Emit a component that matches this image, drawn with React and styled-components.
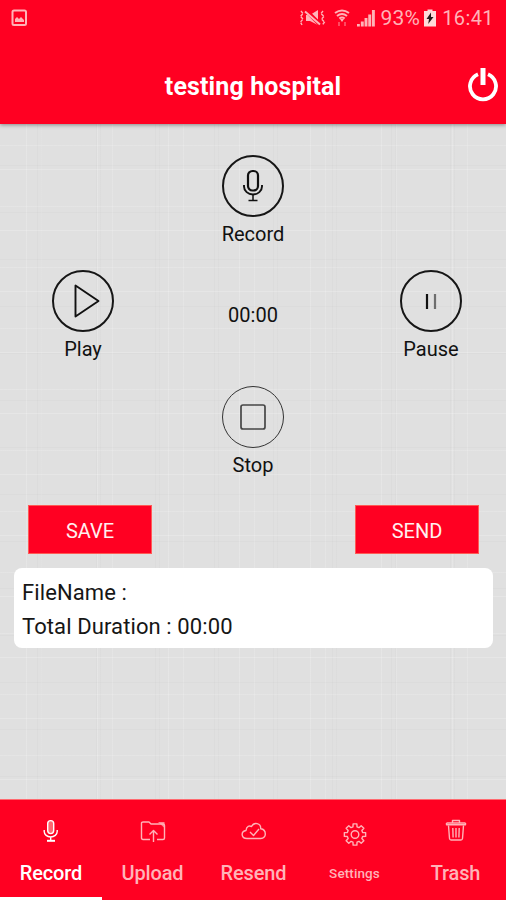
import React from 'react'
import styled, { createGlobalStyle } from 'styled-components'

const RED = '#ff0022';
const PINK = '#ffb3b8';

const GlobalStyle = createGlobalStyle`
  * {
    box-sizing: border-box;
  }
  body {
    margin: 0;
    font-family: Roboto, sans-serif;
  }
`;

const Screen = styled.div`
  width: 506px;
  height: 900px;
  display: flex;
  flex-direction: column;
  overflow: hidden;
`;

const Header = styled.header`
  height: 124px;
  flex-shrink: 0;
  background-color: ${RED};
  box-shadow: 0 1px 4px rgba(0, 0, 0, 0.4);
  z-index: 1;
`;

const StatusBar = styled.div`
  height: 36px;
  padding: 0 12px 0 11px;
  display: flex;
  align-items: center;
  color: ${PINK};
  font-size: 20px;
`;

const StatusIcons = styled.div`
  margin-left: auto;
  margin-right: 6px;
  display: flex;
  align-items: center;
  gap: 7px;
`;

const Battery = styled.span`
  margin-right: 4px;
  font-size: 21px;
  letter-spacing: 0.2px;
`;

const Clock = styled.span`
  margin-left: 6px;
  letter-spacing: 0.4px;
`;

const TitleBar = styled.div`
  height: 88px;
  padding: 0 7px 0 39px;
  display: grid;
  grid-template-columns: 1fr 32px;
  align-items: center;
`;

const Title = styled.h1`
  margin: 13px 0 0 2px;
  padding-right: 2px;
  color: #fff;
  font-size: 25px;
  line-height: 30px;
  font-weight: 700;
  letter-spacing: 0.12px;
  text-align: center;
`;

const PowerButton = styled.button`
  margin-top: 10px;
  padding: 0;
  border: 0;
  background: none;
  height: 36px;
  display: flex;
`;

const Main = styled.main`
  flex: 1;
  padding: 31px 13px 0 14px;
  background-color: #e0e0e0;
  background-image:
    repeating-linear-gradient(90deg, transparent 0 26px, rgba(255, 255, 255, 0.18) 26px 27px, transparent 27px 41px, rgba(255, 255, 255, 0.15) 41px 42px, transparent 42px 71px),
    repeating-linear-gradient(0deg, transparent 0 19px, rgba(255, 255, 255, 0.2) 19px 20px, transparent 20px 43px, rgba(255, 255, 255, 0.15) 43px 44px, transparent 44px 61px),
    repeating-linear-gradient(90deg, transparent 0 37px, rgba(0, 0, 0, 0.018) 37px 38px, transparent 38px 41px, rgba(0, 0, 0, 0.015) 41px 42px, transparent 42px 59px),
    repeating-linear-gradient(0deg, transparent 0 22px, rgba(0, 0, 0, 0.018) 22px 23px, transparent 23px 47px);
`;

const Controls = styled.div`
  height: 350px;
  display: grid;
  grid-template-columns: 138px 202px 154px;
  grid-template-rows: 115px 116px 115px;
`;

const Control = styled.div`
  grid-column: ${props => props.$col};
  grid-row: ${props => props.$row};
  justify-self: center;
  display: flex;
  flex-direction: column;
  align-items: center;
  color: #111;
  font-size: 20px;
  line-height: 24px;
`;

const Round = styled.div`
  width: 62px;
  height: 62px;
  margin-bottom: 5px;
  border: ${props => (props.$thin ? '1.3px solid #333' : '2px solid #161616')};
  border-radius: 50%;
  display: flex;
  align-items: center;
  justify-content: center;
`;

const PlayRound = styled(Round)`
  padding-left: 5px;
`;

const Timer = styled.div`
  grid-column: 2;
  grid-row: 2;
  justify-self: center;
  margin-top: 33px;
  color: #111;
  font-size: 20px;
  line-height: 24px;
`;

const Actions = styled.div`
  padding: 0 14px;
  display: flex;
  justify-content: space-between;
`;

const ActionButton = styled.button`
  width: 124px;
  height: 49px;
  padding: 2px 0 0;
  border: 1px solid #ff5a55;
  background-color: ${RED};
  color: #fff0f0;
  font-family: inherit;
  font-size: 20px;
`;

const FileCard = styled.div`
  height: 80px;
  margin-top: 14px;
  padding: 8px;
  border-radius: 8px;
  background-color: #fff;
  color: #161616;
  font-size: 22px;
  line-height: 34px;
  letter-spacing: 0.1px;
`;

const Tabs = styled.nav`
  height: 101px;
  flex-shrink: 0;
  border-top: 1px solid #ff6a70;
  background-color: ${RED};
  display: grid;
  grid-template-columns: 102px repeat(4, 101px);
`;

const Tab = styled.div`
  padding-top: 18px;
  border-bottom: 3px solid ${props => (props.$active ? '#fff' : 'transparent')};
  display: flex;
  flex-direction: column;
  align-items: center;
  color: ${props => (props.$active ? '#fff' : PINK)};
`;

const TabLabel = styled.span`
  margin-top: 17px;
  font-size: ${props => (props.$small ? '13.5px' : '20px')};
  font-weight: 500;
  line-height: 25px;
  letter-spacing: ${props => (props.$small ? '0.1px' : '-0.15px')};
`;

const Svg = styled.svg`
  display: block;
  fill: none;
  stroke: currentColor;
  stroke-width: ${props => props.$stroke || 1.4};
  stroke-linejoin: round;
`;

const PictureIcon = () => (
  <Svg width="17" height="18" viewBox="0 0 17 18" $stroke={2}>
    <rect x="1.5" y="1.5" width="13.5" height="14.5" rx="1.5" />
    <path d="M4 13v-3l2-2 2 2 2-2 3 3v2z" fill="currentColor" stroke="none" />
  </Svg>
)

const MuteIcon = () => (
  <Svg width="28" height="18" viewBox="0 0 28 18">
    <path d="M7 6h4l8-5v15l-8-4H7z" fill="currentColor" stroke="none" />
    <path d="M7 1.5l14 14" stroke={RED} strokeWidth="4" />
    <path d="M6 2.5l15 13" strokeWidth="2" />
    <path d="M2 2l2 2.500-2.500 3L4 10l-2.500 3L3 16M24 2l-2 2.500 3 3-2.500 2.500 3 3-2 3" strokeDasharray="3 .8" />
  </Svg>
)

const WifiIcon = () => (
  <Svg width="16" height="18" viewBox="0 0 16 18" $stroke={2}>
    <path d="M1 4q7-5 14 0M3 7q5-4 10 0M5.3 9.5q2.700-2 5.400 0" />
    <path d="M6 10h4l-2 3z" fill="currentColor" stroke="none" />
    <path d="M5 13v4M11 13v4" strokeWidth="1.5" opacity=".55" />
  </Svg>
)

const SignalIcon = () => (
  <Svg width="18" height="18" viewBox="0 0 18 18" $stroke={2.9}>
    <path d="M1.4 17.5V15M5.3 17.5v-5M9 17.5V9M12.7 17.5v-12M16.4 17.5V1" />
  </Svg>
)

const BatteryIcon = () => (
  <Svg width="12" height="18" viewBox="0 0 12 18">
    <path d="M0 2h3.5V.5h5V2H12v15.5H0z" fill="#ffd9d9" stroke="none" />
    <path d="M7 3.5L2.5 10H5l-.8 5L9.5 8H7z" fill="#24181a" stroke="none" />
  </Svg>
)

const PowerIcon = () => (
  <svg width="32" height="36" viewBox="0 0 32 36" fill="none" stroke="#fff">
    <path d="M11 7.300A13 13 0 1 0 21 7.300" strokeWidth="3.8" />
    <path d="M16 1v17" strokeWidth="5" />
  </svg>
)

const MicIcon = () => (
  <Svg width="22" height="34" viewBox="0 0 22 34" $stroke={1.9}>
    <rect x="6" y="2" width="10" height="19.5" rx="4.5" strokeWidth="2.2" />
    <path d="M2 16v1.500a9 8 0 0 0 18 0V16" />
    <path d="M11 25.500v6M6.500 31.500h9" strokeWidth="1.5" />
  </Svg>
)

const PlayIcon = () => (
  <Svg width="28" height="34" viewBox="0 0 28 34" $stroke={1.9}>
    <path d="M3.500 1.500v31L26.500 17z" />
  </Svg>
)

const PauseIcon = () => (
  <Svg width="12" height="17" viewBox="0 0 12 17">
    <path d="M2 1v15" strokeWidth="2.2" />
    <path d="M10 1v15" strokeWidth="2.2" opacity=".55" />
  </Svg>
)

const StopIcon = () => (
  <Svg width="26" height="26" viewBox="0 0 26 26" $stroke={1.7}>
    <rect x="1" y="1" width="24" height="24" rx="2" opacity=".75" />
  </Svg>
)

const TabMicIcon = () => (
  <Svg width="24" height="26" viewBox="0 0 24 26">
    <rect x="8.7" y="2.6" width="6" height="13" rx="3" fill="#ff6670" />
    <path d="M5.2 12v1.5a6.5 5.5 0 0 0 13 0V12M11.7 19v4" />
    <path d="M8 22.8h8" strokeWidth="2" />
  </Svg>
)

const UploadIcon = () => (
  <Svg width="26" height="26" viewBox="0 0 26 26" $stroke={1.4}>
    <path d="M10 21.500H3q-1.500 0-1.500-1.500V5Q1.500 4 3 4h6l2 2h12q1.500 0 1.500 1.500V20q0 1.500-1.500 1.500h-6" />
    <path d="M13.500 24V13M9.500 16.500l4-4 4 4" />
    <path d="M18 4h6.500v6z" fill="currentColor" stroke="none" opacity=".75" />
  </Svg>
)

const CloudIcon = () => (
  <Svg width="26" height="26" viewBox="0 0 26 26" $stroke={1.4}>
    <path d="M6 20.500c-6 0-6.500-7-1-8C5.500 8 8.500 7.500 10.500 8.500 13 3.500 20 5 19.700 10.700c6 .8 6.300 9.800 0 9.800z" />
    <path d="M9 14l3.500 3.500 5.500-6.500" />
  </Svg>
)

// eight teeth around the wheel
const gearPoints = () => {
  const points = [];
  for (let i = 0; i < 8; i++) {
    [[-15, 7.9], [-10, 10.8], [10, 10.8], [15, 7.9]].forEach(([offset, r]) => {
      const a = ((i * 45 + offset) * Math.PI) / 180;
      points.push(`${(13 + r * Math.sin(a)).toFixed(2)},${(16.5 - r * Math.cos(a)).toFixed(2)}`);
    });
  }
  return points.join(' ');
}

const GearIcon = () => (
  <Svg width="26" height="26" viewBox="0 0 26 26" overflow="visible">
    <polygon points={gearPoints()} />
    <circle cx="13" cy="16.5" r="3.8" />
  </Svg>
)

const TrashIcon = () => (
  <Svg width="26" height="26" viewBox="0 0 26 26">
    <path d="M3.500 5h19M9.500 4.500V2.500h7v2M3.500 5v1.800h19V5" />
    <path d="M5.500 7.500l1 13q.2 1.500 1.500 1.500h10q1.300 0 1.500-1.500l1-13M9.800 10l.3 9.500M13 10v9.500M16.200 10l-.3 9.500" />
  </Svg>
)

const tabs = [
  { label: 'Record', icon: <TabMicIcon />, active: true },
  { label: 'Upload', icon: <UploadIcon /> },
  { label: 'Resend', icon: <CloudIcon /> },
  { label: 'Settings', icon: <GearIcon />, small: true },
  { label: 'Trash', icon: <TrashIcon /> },
];

const App = () => {
  return (
    <Screen>
      <GlobalStyle />
      <Header>
        <StatusBar>
          <PictureIcon />
          <StatusIcons>
            <MuteIcon />
            <WifiIcon />
            <SignalIcon />
          </StatusIcons>
          <Battery>93%</Battery>
          <BatteryIcon />
          <Clock>16:41</Clock>
        </StatusBar>
        <TitleBar>
          <Title>testing hospital</Title>
          <PowerButton aria-label="Log out">
            <PowerIcon />
          </PowerButton>
        </TitleBar>
      </Header>
      <Main>
        <Controls>
          <Control $col={2} $row={1}>
            <Round><MicIcon /></Round>
            Record
          </Control>
          <Control $col={1} $row={2}>
            <PlayRound><PlayIcon /></PlayRound>
            Play
          </Control>
          <Timer>00:00</Timer>
          <Control $col={3} $row={2}>
            <Round><PauseIcon /></Round>
            Pause
          </Control>
          <Control $col={2} $row={3}>
            <Round $thin><StopIcon /></Round>
            Stop
          </Control>
        </Controls>
        <Actions>
          <ActionButton>SAVE</ActionButton>
          <ActionButton>SEND</ActionButton>
        </Actions>
        <FileCard>
          <div>FileName :</div>
          <div>Total Duration : 00:00</div>
        </FileCard>
      </Main>
      <Tabs>
        {tabs.map((tab) => (
          <Tab key={tab.label} $active={tab.active}>
            {tab.icon}
            <TabLabel $small={tab.small}>{tab.label}</TabLabel>
          </Tab>
        ))}
      </Tabs>
    </Screen>
  )
}

export default App
